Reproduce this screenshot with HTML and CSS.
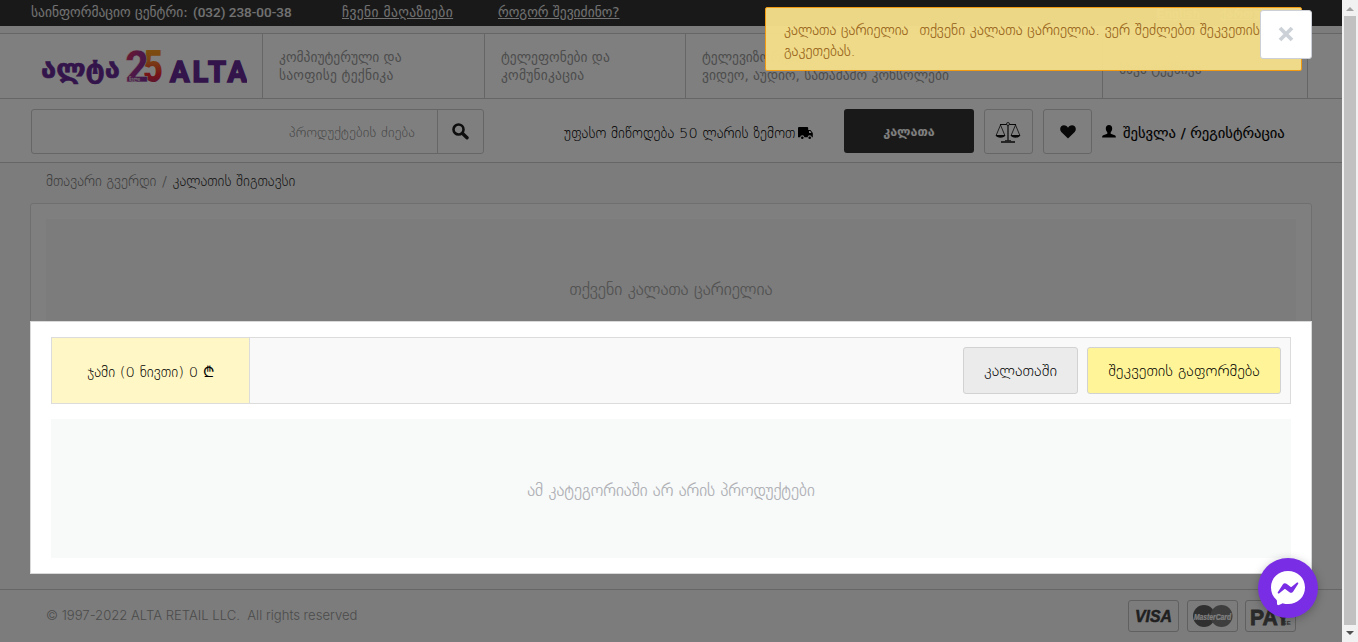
FILE: index.html
```
<!DOCTYPE html>
<html lang="ka">
<head>
<meta charset="utf-8">
<title>ALTA</title>
<link rel="stylesheet" href="styles.css">
</head>
<body>
<div class="page">
  <div class="topbar">
    <span class="t-info">საინფორმაციო ცენტრი:</span>
    <span class="t-phone">(032) 238-00-38</span>
    <a class="t-shops">ჩვენი მაღაზიები</a>
    <a class="t-how">როგორ შევიძინო?</a>
    <span class="langs"><a>English</a><a>ქართული</a></span>
  </div>
  <nav class="nav">
    <div class="logo">
      <svg width="206" height="36" viewBox="0 0 206 36">
        <defs>
          <linearGradient id="g2" x1="0" y1="0" x2="1" y2="1"><stop offset="0" stop-color="#f8303c"/><stop offset=".45" stop-color="#a0308e"/><stop offset="1" stop-color="#6c2f9c"/></linearGradient>
          <linearGradient id="g5" x1="0" y1="0" x2="0" y2="1"><stop offset="0" stop-color="#ffae18"/><stop offset=".35" stop-color="#f58a28"/><stop offset=".65" stop-color="#ee2730"/><stop offset="1" stop-color="#6c2f9c"/></linearGradient>
        </defs>
        <text class="logo-ka" x="0" y="29" textLength="79" lengthAdjust="spacingAndGlyphs">ალტა</text>
        <text class="logo-num" x="102" y="33" fill="url(#g5)" textLength="20" lengthAdjust="spacingAndGlyphs">5</text>
        <text class="logo-num logo-two" x="84" y="33" fill="url(#g2)" textLength="24" lengthAdjust="spacingAndGlyphs">2</text>
        <text class="logo-tiny" x="88" y="31.5" textLength="11" lengthAdjust="spacingAndGlyphs">წელი</text>
        <text class="logo-en" x="129" y="33" textLength="77" lengthAdjust="spacing">ALTA</text>
      </svg>
    </div>
    <div class="cat c1"><span>კომპიუტერული და</span><span class="wide">საოფისე ტექნიკა</span></div>
    <div class="cat c2"><span>ტელეფონები და</span><span class="wide">კომუნიკაცია</span></div>
    <div class="cat c3"><span>ტელევიზორები,</span><span>ვიდეო, აუდიო, სათამაშო კონსოლები</span></div>
    <div class="cat c4"><span>სხვა ტექნიკა</span></div>
  </nav>
  <div class="tools">
    <div class="search">
      <span class="ph">პროდუქტების ძიება</span>
      <span class="go"><svg width="17" height="17" viewBox="0 0 17 17"><circle cx="6.5" cy="6.5" r="5" fill="none" stroke="#1c1c1c" stroke-width="2.6"/><path d="M10.3 10.3l4.7 4.5" stroke="#1c1c1c" stroke-width="3.4" stroke-linecap="round"/></svg></span>
    </div>
    <div class="ship"><span>უფასო მიწოდება 50 ლარის ზემოთ</span>
      <svg width="16" height="13" viewBox="0 0 16 13"><path d="M1 0h8.2a1 1 0 0 1 1 1v2h2.300l2.300 3v4.300h-1a2.100 2.100 0 0 0-4.200 0H6.400a2.100 2.100 0 0 0-4.200 0H0V1a1 1 0 0 1 1-1z"/><path d="M11 4h1.200l1.300 2H11z" fill="#fff"/><circle cx="4.300" cy="10.700" r="1.300"/><circle cx="11.700" cy="10.700" r="1.300"/></svg>
    </div>
    <div class="cart">კალათა</div>
    <div class="sq"><svg width="26" height="22" viewBox="0 0 26 22" fill="none" stroke="#111" stroke-width=".8"><path d="M5 2.500h16M13 2v16.500" stroke-width="1.200"/><circle cx="13" cy="2" r="1.500" fill="#fff"/><path d="M6 20h14" stroke-width="1.500"/><path d="M10 18.600h6"/><path d="M5.500 3L1.300 13M5.500 3l4.200 10M20.500 3l-4.200 10M20.500 3l4.200 10"/><path d="M.5 13h10c-1 3.600-9 3.600-10 0zM15.500 13h10c-1 3.600-9 3.600-10 0z" fill="#111" stroke="none"/></svg></div>
    <div class="sq heart"><svg width="16" height="14" viewBox="0 0 16 14"><path d="M8 13.500L1.300 7C-2 3 2.500-1.700 6.500 1.100Q7.400 1.700 8 2.700Q8.600 1.700 9.500 1.100C13.500-1.700 18 3 14.700 7z" fill="#111"/></svg></div>
    <div class="login"><svg width="14" height="13" viewBox="0 0 14 13"><path d="M7 0c2 0 3.200 1.400 3.200 3.400 0 1.800-.8 3-1.500 3.800v1.500l4 1.600c.8.400 1.200 1 1.200 2.200H.1c0-1.200.4-1.800 1.200-2.200l4-1.600V7.200C4.600 6.400 3.800 5.200 3.800 3.400 3.800 1.400 5 0 7 0z"/></svg><span>შესვლა / რეგისტრაცია</span></div>
  </div>
  <main class="main">
    <div class="crumbs"><a>მთავარი გვერდი</a><i>/</i><b>კალათის შიგთავსი</b></div>
    <div class="card"><div class="empty">თქვენი კალათა ცარიელია</div></div>
  </main>
  <footer class="footer">
    <span class="copy">© 1997-2022 ALTA RETAIL LLC.&nbsp; All rights reserved</span>
    <div class="pays">
      <span class="pay"><svg width="49" height="30" viewBox="0 0 49 30"><text class="visa" x="6" y="21" textLength="37" lengthAdjust="spacingAndGlyphs">VISA</text></svg></span>
      <span class="pay"><svg width="49" height="30" viewBox="0 0 49 30"><circle cx="16" cy="15" r="11" fill="#606060"/><circle cx="33.500" cy="15" r="11" fill="#7c7c7c"/><text class="mc" x="6" y="18.500" textLength="37" lengthAdjust="spacingAndGlyphs">MasterCard</text></svg></span>
      <span class="pay last"><svg width="49" height="30" viewBox="0 0 49 30"><text class="paybig" x="4" y="24" textLength="40" lengthAdjust="spacingAndGlyphs">PAY</text><text class="payge" x="36" y="24">GE</text></svg></span>
    </div>
  </footer>

  <div class="overlay"></div>

  <section class="popup">
    <div class="bar">
      <div class="sum">ჯამი (0 ნივთი) 0 ₾</div>
      <div class="btns"><a class="btn">კალათაში</a><a class="btn yellow">შეკვეთის გაფორმება</a></div>
    </div>
    <div class="none">ამ კატეგორიაში არ არის პროდუქტები</div>
  </section>
  <div class="alert"><span>კალათა ცარიელია</span><span class="msg">თქვენი კალათა ცარიელია. ვერ შეძლებთ შეკვეთის</span><br>გაკეთებას.</div>
  <div class="close"><svg width="16" height="16" viewBox="0 0 16 16"><path d="M2 2l12 12M14 2L2 14" stroke="#ccd1d8" stroke-width="3.800"/></svg></div>
  <div class="chat"><svg width="36" height="36" viewBox="0 0 36 36"><path d="M18 1C8.300 1 1 8.100 1 17.400c0 5 2 9.300 5.400 12.300.3.300.5.700.5 1.100l.1 3c0 1 1 1.600 1.900 1.200l3.400-1.500c.3-.1.600-.2.900-.1 1.500.4 3.100.6 4.800.6 9.700 0 17-7.100 17-16.600S27.700 1 18 1z" fill="#fff"/><path d="M7.800 22.300l5-7.900c.8-1.300 2.500-1.600 3.700-.7l4 3c.3.300.8.300 1.200 0l5.300-4.100c.8-.6 1.700.3 1.200 1.100l-5 7.900c-.8 1.300-2.500 1.600-3.700.7l-4-3c-.3-.3-.8-.3-1.200 0l-5.300 4.100c-.8.500-1.700-.3-1.200-1.100z" fill="#792de4"/></svg></div>
</div>
<div class="scroll"><i class="up"></i><i class="thumb"></i><i class="down"></i></div>
</body>
</html>
```
FILE: styles.css
```
* { box-sizing: border-box; }
body { margin: 0; width: 1358px; height: 642px; overflow: hidden; display: flex; font: 400 13.5px/18px "DejaVu Sans", sans-serif; background: #f8f8f8; }
i, b { font-style: normal; font-weight: inherit; }
.page { position: relative; width: 1342px; height: 642px; overflow: hidden; display: flex; flex-direction: column; }

.topbar { height: 26px; background: #333; color: #e4e4e4; display: flex; padding: 3px 0 0 31px; flex: none; white-space: nowrap; }
.topbar a { text-decoration: underline; }
.t-info { width: 162px; }
.t-phone { width: 149px; font: 500 13.5px/18px Roboto, sans-serif; letter-spacing: 0; }
.t-shops { width: 156px; letter-spacing: .4px; font-size: 13.5px; }
.langs { display: flex; gap: 20px; margin-left: 537px; padding-top: 3px; line-height: 16px; font-family: "Liberation Sans", "DejaVu Sans", sans-serif; font-weight: 700; font-size: 12px; }

.nav { margin-top: 7px; height: 66px; border: solid #ccc; border-width: 1px 0; background: #fff; display: flex; flex: none; }
.logo { width: 263px; border-right: 1px solid #ccc; padding: 15px 0 0 41px; }
.logo svg { display: block; }
.logo text { font-family: "DejaVu Sans", sans-serif; font-weight: 700; fill: #662a96; }
.logo .logo-ka { font-size: 27px; stroke: #662a96; stroke-width: .7; }
.logo .logo-en { font: 700 29px Roboto, sans-serif; stroke: #662a96; stroke-width: 1.6; }
.logo .logo-num { font: 900 44px Roboto, sans-serif; fill: url(#g5); }
.logo .logo-two { fill: url(#g2); stroke: #fff; stroke-width: .5; }
.logo .logo-tiny { font-size: 6px; fill: #ddd; }
.cat { display: flex; flex-direction: column; justify-content: center; padding: 0 0 0 16px; border-right: 1px solid #ccc; color: #999; white-space: nowrap; }
.cat .wide { letter-spacing: .22px; }
.c1 { width: 222px; }
.c2 { width: 201px; }
.c3 { width: 417px; }
.c4 { width: 205px; padding-top: 6px; }

.tools { height: 64px; border-bottom: 1px solid #ccc; background: #fff; display: flex; align-items: flex-start; padding: 10px 0 0 31px; flex: none; white-space: nowrap; }
.search { width: 453px; height: 45px; border: 1px solid #ccc; border-radius: 3px; display: flex; line-height: 45px; }
.ph { width: 406px; border-right: 1px solid #ccc; text-align: right; padding-right: 22px; font-weight: 200; font-size: 14px; letter-spacing: .18px; color: #888; }
.go { flex: 1; display: flex; align-items: center; justify-content: center; }
.ship { margin-left: 80px; width: 280px; display: flex; align-items: center; gap: 3px; height: 48px; font-weight: 200; font-size: 14.6px; letter-spacing: .05px; color: #000; }
.cart { width: 130px; height: 44px; background: #333; border-radius: 3px; color: #fff; font-weight: 700; font-size: 12.5px; line-height: 45px; text-align: center; }
.sq { width: 49px; height: 45px; border: 1px solid #ccc; border-radius: 3px; margin-left: 10px; display: flex; align-items: center; justify-content: center; padding: 3px 1px 0 0; }
.heart { padding: 0; }
.login { display: flex; align-items: center; height: 47px; margin-left: 10px; gap: 7px; font-size: 14.6px; color: #000; -webkit-text-stroke: .12px #000; }
.login svg { margin-top: -3px; }

.main { height: 426px; background: #f8f8f8; padding: 0 30px; flex: none; }
.crumbs { height: 40px; padding: 0 16px; line-height: 36px; font-weight: 200; font-size: 14.6px; color: #777; display: flex; }
.crumbs i { width: 16px; text-align: center; }
.crumbs b { color: #222; }
.card { height: 360px; border: 1px solid #dedede; border-radius: 3px; background: #fff; padding: 15px; }
.empty { height: 141px; background: #f8f8f8; font-weight: 200; font-size: 17.1px; line-height: 141px; text-align: center; color: #999; -webkit-text-stroke: .2px #b0b0b0; }
.footer { flex: 1; border-top: 1px solid #ccc; background: #f8f8f8; display: flex; justify-content: space-between; padding: 10px 46px 0; }
.copy { font: 300 13.1px/30px Inter, "Liberation Sans", sans-serif; color: #999; }
.pays { display: flex; gap: 8px; }
.pay { width: 51px; height: 32px; border: 1px solid #c0c0c0; border-radius: 3px; }
.pay.last { margin-left: -1px; }
.pay svg { display: block; }
.visa { font: italic 700 17px "Liberation Sans", sans-serif; fill: #404040; stroke: #404040; stroke-width: .5; }
.mc { font: italic 700 8.5px "Liberation Sans", sans-serif; fill: #fff; stroke: #fff; stroke-width: .2; }
.paybig { font: 700 22px "Liberation Sans", sans-serif; fill: #555; stroke: #555; stroke-width: .8; }
.payge { font: 700 6px "Liberation Sans", sans-serif; fill: #666; }

.overlay { position: absolute; inset: 0; background: rgba(0, 0, 0, .5); }

.popup { position: absolute; left: 30px; top: 321px; width: 1282px; height: 253px; background: #fff; border: 1px solid #d8dada; padding: 15px 20px; font-weight: 200; color: #000; white-space: nowrap; }
.bar { height: 67px; border: 1px solid #dcdcdc; background: #f9f9f9; display: flex; justify-content: space-between; }
.sum { width: 198px; border-right: 1px solid #dcdcdc; background: #fff7c5; text-align: center; font-size: 14.8px; line-height: 68px; }
.btns { display: flex; gap: 9px; padding: 9px; }
.btn { width: 115px; height: 47px; border: 1px solid #d2d2d2; border-radius: 3px; background: #ebebeb; text-align: center; font-size: 16.200px; line-height: 46px; }
.btn.yellow { width: 194px; background: #fff598; font-size: 16px; }
.none { margin-top: 15px; height: 139px; background: #f7faf9; color: #a6a6ac; -webkit-text-stroke: .2px #b4b4ba; font-size: 16.800px; line-height: 142px; text-align: center; }

.alert { position: absolute; left: 765px; top: 7px; width: 537px; height: 64px; border: 1px solid #f29a12; border-radius: 2px; background: rgba(241, 220, 137, .975); color: #8f5a14; padding: 11px 18px; font-weight: 200; font-size: 14.700px; line-height: 21px; white-space: nowrap; overflow: hidden; -webkit-text-stroke: .15px #a66a20; }
.msg { margin-left: 11px; letter-spacing: .07px; }
.close { position: absolute; left: 1260px; top: 10px; width: 52px; height: 49px; background: #fff; border: 1px solid #ccd0d6; border-radius: 3px; display: flex; align-items: center; justify-content: center; padding-bottom: 2px; }
.chat { position: absolute; left: 1258px; top: 558px; width: 60px; height: 60px; border-radius: 50%; background: #792de4; box-shadow: 0 2px 10px rgba(0, 0, 0, .25); display: flex; align-items: center; justify-content: center; }

.scroll { width: 16px; height: 642px; background: #f1f1f1; display: flex; flex-direction: column; align-items: center; }
.up { margin-top: 7px; border: solid transparent; border-width: 0 4px 4px; border-bottom-color: #a3a3a3; }
.thumb { margin-top: 5px; width: 12px; height: 609px; background: #c1c1c1; }
.down { margin-top: 6px; border: solid transparent; border-width: 4px 4px 0; border-top-color: #505050; }
```
